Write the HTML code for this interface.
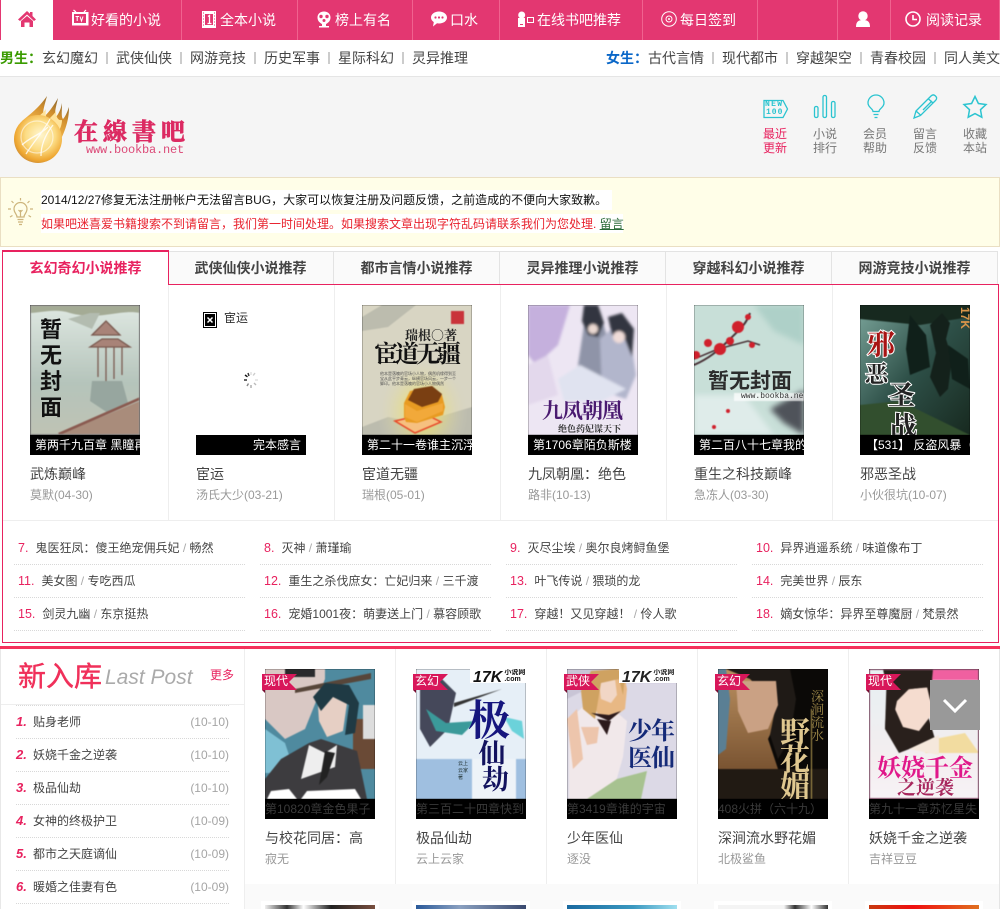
<!DOCTYPE html>
<html lang="zh"><head><meta charset="utf-8"><title>在線書吧</title>
<style>
*{box-sizing:border-box}
html,body{margin:0;padding:0;background:#fff}
body{width:1000px;height:909px;position:relative;overflow:hidden;font:12px/20px "Liberation Sans","Noto Sans CJK SC",sans-serif;color:#333}
.a{position:absolute}
.t{position:absolute;white-space:nowrap;height:20px;line-height:20px}
.n{color:#fff;font-size:14px}
.v{position:absolute;top:0;height:40px;width:1px;background:#f0628f}
.s{font-size:14px;color:#444}
.s i{display:inline-block;width:2px;height:12px;background:#ccc;margin:0 8px;vertical-align:-1px}
.c{font-family:"Noto Sans CJK TC",sans-serif}
.ic{position:absolute;left:0;top:0}
.lb{position:absolute;width:30px;text-align:center;font-size:12px;line-height:14px;color:#777}
.tab{position:absolute;top:251px;height:34px;width:166px;background:#fafafa;border-top:1px solid #e3e3e3;border-right:1px solid #e3e3e3;text-align:center;font-size:14px;font-weight:bold;color:#444;line-height:32px}
.col{position:absolute;top:285px;height:235px;width:1px;background:#eee}
.cv{position:absolute;width:110px;height:150px;overflow:hidden;background:#000}
.cv svg{position:absolute;left:0;top:0;display:block;filter:blur(.5px)}
.cap{position:absolute;left:0;top:130px;width:110px;height:20px;background:#000;color:#fff;font-size:12px;line-height:20px;white-space:nowrap;overflow:hidden;padding-left:5px}
.c2{color:#3a3a3a;padding-left:0}
.ti{position:absolute;font-size:14px;color:#444;white-space:nowrap;line-height:20px}
.au{position:absolute;font-size:12px;color:#999;white-space:nowrap;line-height:20px}
.li{position:absolute;width:231px;height:33px;border-bottom:1px dotted #d8d8d8;font-size:12px;color:#444;white-space:nowrap;padding-left:4px;line-height:32px}
.li b{font-weight:normal;font-size:12.5px;color:#e8225f;margin-right:7px}
.li i{font-style:normal;color:#aaa}
.r{position:absolute;left:16px;width:213px;height:33px;border-bottom:1px dotted #d8d8d8;font-size:12px;color:#444;line-height:32px;white-space:nowrap}
.r b{display:inline-block;width:17px;color:#e8225f;font:italic bold 13px/32px "Liberation Sans",sans-serif}
.r span{position:absolute;right:0;top:0;color:#a5a5a5}
.rb{position:absolute;width:39px;height:17px}
.rb span{position:absolute;left:5px;top:-2px;font-size:12px;line-height:20px;color:#fff;letter-spacing:0}
.d{position:absolute;top:649px;height:235px;width:1px;background:#eee}
.o{-webkit-text-stroke:2px #fff;paint-order:stroke fill}
</style></head><body>

<!-- top nav -->
<div class="a" style="left:0;top:0;width:1000px;height:40px;background:#e33771"></div>
<div class="a" style="left:1px;top:0;width:52px;height:40px;background:#fff"></div>
<div class="v" style="left:181px"></div><div class="v" style="left:297px"></div><div class="v" style="left:412px"></div><div class="v" style="left:499px"></div><div class="v" style="left:642px"></div><div class="v" style="left:757px"></div><div class="v" style="left:837px"></div><div class="v" style="left:890px"></div><div class="v" style="left:999px"></div>
<svg class="ic" width="1000" height="40" viewBox="0 0 1000 40">
 <path d="M27 11 18 19.500 20 21 27 14.500 34 21 36 19.500 32.500 16V12H30V13.800Z" fill="#e33771"/>
 <path d="M21 21 27 16 33 21V27H29.500V22.500H24.500V27H21Z" fill="#e33771"/>
 <path d="M72 12h16.500v13.500H72z" fill="#fff"/><path d="M76 12 73.500 10M84 12 86 10" stroke="#fff" fill="none" stroke-width="1.200"/><path d="M74 14h12v9H74z" fill="#e33771"/><path d="M75.500 16.500h3.500M77.200 16.500v4.500M80 16.500l1.500 4.500 1.500-4.500" stroke="#fff" fill="none"/>
 <path d="M202 11h14v17h-14z" fill="#fff"/><path d="M205 14h8v11h-8z" fill="#e33771"/><path d="M208 16.500 209.500 15.500V23.500M207.500 23.500h4" stroke="#fff" fill="none" stroke-width="1.300"/><path d="M203 13h1M203 16h1M203 19h1M203 22h1M203 25h1M214 13h1M214 16h1M214 19h1M214 22h1M214 25h1" stroke="#e33771"/>
 <path d="M324 11.500c4 0 6.500 2.600 6.500 6 0 3.500-2.500 5.500-4.500 6.500v2h3v1.500h-10V26h3v-2c-2-1-4.500-3-4.500-6.500 0-3.400 2.500-6 6.500-6z" fill="#fff"/><circle cx="321" cy="16.500" r="1.700" fill="#e33771"/><circle cx="327" cy="16.500" r="1.700" fill="#e33771"/><circle cx="324" cy="20.500" r="1.500" fill="#e33771"/>
 <path d="M439 11.500c4.400 0 8 2.500 8 6s-3.600 6-8 6c-.7 0-1.300-.1-2-.2L433 26.500l.8-4.400c-1.700-1.100-2.800-2.700-2.800-4.600 0-3.500 3.600-6 8-6z" fill="#fff"/><circle cx="435.500" cy="17.500" r="1.100" fill="#e33771"/><circle cx="439" cy="17.500" r="1.100" fill="#e33771"/><circle cx="442.500" cy="17.500" r="1.100" fill="#e33771"/>
 <path d="M518 18h7v9h-7z" fill="#fff"/><circle cx="521.700" cy="15" r="3.500" fill="#fff"/><path d="M520 24.500h3" stroke="#e33771"/><path d="M527.500 17.500h6v5h-6z" fill="none" stroke="#fff"/>
 <circle cx="669" cy="19" r="7.300" fill="none" stroke="#fff"/><circle cx="669" cy="19" r="3" fill="none" stroke="#fff"/><circle cx="669" cy="19" r="1" fill="#fff"/>
 <circle cx="863" cy="16" r="4.700" fill="#fff"/><path d="M856 27c0-5 2-7 7-7s7 2 7 7z" fill="#fff"/>
 <circle cx="913" cy="19" r="7" fill="none" stroke="#fff" stroke-width="1.600"/><path d="M913 15v4.500h4" fill="none" stroke="#fff" stroke-width="1.600"/>
</svg>
<div class="t n" style="left:91px;top:10px">好看的小说</div>
<div class="t n" style="left:220px;top:10px">全本小说</div>
<div class="t n" style="left:335px;top:10px">榜上有名</div>
<div class="t n" style="left:450px;top:10px">口水</div>
<div class="t n" style="left:537px;top:10px">在线书吧推荐</div>
<div class="t n" style="left:680px;top:10px">每日签到</div>
<div class="t n" style="left:926px;top:10px">阅读记录</div>

<!-- sub nav -->
<div class="a" style="left:0;top:76px;width:1000px;height:1px;background:#e5e5e5"></div>
<div class="t s" style="left:0;top:48px"><b style="color:#3a9b00">男生<span class="c">：</span></b>玄幻魔幻<i></i>武侠仙侠<i></i>网游竞技<i></i>历史军事<i></i>星际科幻<i></i>灵异推理</div>
<div class="t s" style="left:606px;top:48px"><b style="color:#0a67c8">女生<span class="c">：</span></b>古代言情<i></i>现代都市<i></i>穿越架空<i></i>青春校园<i></i>同人美文</div>

<!-- header -->
<div class="a" style="left:0;top:77px;width:1000px;height:100px;background:#f5f5f5"></div>
<svg class="ic" style="top:85px" width="200" height="85" viewBox="0 0 200 85">
 <defs><radialGradient id="fl" cx=".55" cy=".42" r=".62"><stop offset="0" stop-color="#fff6cf"/><stop offset=".5" stop-color="#fcdc84"/><stop offset=".85" stop-color="#eeA630"/><stop offset="1" stop-color="#c98a3a"/></radialGradient>
 <linearGradient id="fm" x1=".8" y1="0" x2=".2" y2="1"><stop offset="0" stop-color="#7a5c2c"/><stop offset=".35" stop-color="#d18f2e"/><stop offset=".8" stop-color="#fbbf50"/></linearGradient></defs>
 <path d="M22 36C30 29 38 24 47 11 44 22 42 28 44 32 50 26 54 20 58 13 56 22 54 28 56 32 59 28 61 24 62 18 62 26 61 32 63 34 65 32 67 28 69 22 69 34 66 44 60 56L40 50Z" fill="url(#fm)"/>
 <path d="M36 34C40 30 43 28 46 24 45 30 46 34 50 33 53 30 55 28 56 26 56 32 58 36 62 35 62 40 60 44 58 48L40 44Z" fill="#ffe39a"/>
 <circle cx="38" cy="54" r="24" fill="url(#fl)"/>
 <circle cx="37" cy="52" r="16" fill="none" stroke="#fff" stroke-width="1.200" opacity=".55"/>
 <path d="M26 69C34 56 44 46 50 34M41 71C41 60 45 50 53 40M22 60C30 52 40 50 48 42" stroke="#fff" fill="none" stroke-width="1.300" opacity=".8"/>
</svg>
<div class="t" style="left:74px;top:114px;height:32px;font:bold 24px/32px 'Noto Serif CJK SC',serif;color:#dc2a62;letter-spacing:5px;-webkit-text-stroke:.7px #dc2a62">在線書吧</div>
<div class="t" style="left:86px;top:140px;font:12px/20px 'Liberation Mono',monospace;color:#dc4a78;letter-spacing:-.2px">www.bookba.net</div>

<svg class="ic" width="1000" height="130" viewBox="0 0 1000 130" fill="none" stroke="#2bc4d0" stroke-width="1.300">
 <path d="M764 100.500h19l4.500 8.500-4.500 8.500h-19z"/>
 <rect x="814.500" y="106.500" width="3.500" height="11" rx="1.500"/><rect x="823" y="95.500" width="3.500" height="22" rx="1.500"/><rect x="831.500" y="101.500" width="3.500" height="16" rx="1.500"/>
 <g transform="translate(0 2.500)"><path d="M873 109c0-3-5-4-5-8.500a8 8 0 0 1 16 0c0 4.500-5 5.500-5 8.500zM873.500 112h5M874.500 115h3"/></g>
 <path d="M914 118l2-7 15-15c1.500-1.500 3-1.500 4.500 0s1.500 3 0 4.500l-15 15zM916 111l5 4.500M928 98.500l5 4.500M920 107l9-9M923 110l9-9"/>
 <path d="M975 96.500l3.400 7 7.600 1-5.500 5.200 1.300 7.500-6.800-3.600-6.800 3.600 1.300-7.500-5.500-5.200 7.600-1z" stroke-width="1.500"/>
</svg>
<div class="t" style="left:765px;top:100px;width:22px;height:9px;font:bold 8px/9px 'Liberation Mono',monospace;color:#2bc4d0;letter-spacing:1.300px">NEW</div>
<div class="t" style="left:766px;top:108px;width:22px;height:9px;font:bold 8px/9px 'Liberation Mono',monospace;color:#2bc4d0;letter-spacing:1px">100</div>
<div class="lb" style="left:760px;top:127px;color:#e8225f">最近<br>更新</div>
<div class="lb" style="left:810px;top:127px">小说<br>排行</div>
<div class="lb" style="left:860px;top:127px">会员<br>帮助</div>
<div class="lb" style="left:910px;top:127px">留言<br>反馈</div>
<div class="lb" style="left:960px;top:127px">收藏<br>本站</div>

<!-- notice -->
<div class="a" style="left:0;top:177px;width:1000px;height:70px;background:#fffee8;border:1px solid #eadfc3"></div>
<svg class="ic" style="left:8px;top:197px" width="25" height="30" viewBox="0 0 25 30" fill="none" stroke="#cdb57c" stroke-width="1.200">
 <path d="M9 20c0-3-3-4-3-8a6.500 6.500 0 0 1 13 0c0 4-3 5-3 8zM9.500 22.500h6M10 25h5M11 27.500h3M12.500 20v-7M10.500 13l2 2 2-2"/>
 <path d="M12.500 1v2.500M3.500 4l2 2M21.500 4l-2 2M0 12h3M22 12h3M2 20l2.500-1.500M23 20l-2.500-1.500"/>
</svg>
<div class="t" style="left:41px;top:190px;height:20px;background:#fff;color:#111;width:571px">2014/12/27修复无法注册帐户无法留言BUG，大家可以恢复注册及问题反馈，之前造成的不便向大家致歉。</div>
<div class="t" style="left:41px;top:214px;height:19px;background:#fff;color:#e8222e;width:582px">如果吧迷喜爱书籍搜索不到请留言，我们第一时间处理。如果搜索文章出现字符乱码请联系我们为您处理. <span style="color:#2a6a38;text-decoration:underline">留言</span></div>

<!-- tabs -->
<div class="tab" style="left:168px">武侠仙侠小说推荐</div>
<div class="tab" style="left:334px">都市言情小说推荐</div>
<div class="tab" style="left:500px">灵异推理小说推荐</div>
<div class="tab" style="left:666px">穿越科幻小说推荐</div>
<div class="tab" style="left:832px">网游竞技小说推荐</div>
<div class="a" style="left:2px;top:284px;width:997px;height:359px;border:1px solid #e8225f"></div>
<div class="a" style="left:2px;top:250px;width:167px;height:36px;background:#fff;border:1px solid #e8225f;border-bottom:0;border-top-width:2px;text-align:center;font-size:14px;font-weight:bold;color:#e8225f;line-height:33px">玄幻奇幻小说推荐</div>
<div class="col" style="left:168px"></div><div class="col" style="left:334px"></div><div class="col" style="left:500px"></div><div class="col" style="left:666px"></div><div class="col" style="left:832px"></div>
<div class="a" style="left:3px;top:520px;width:995px;height:1px;background:#eee"></div>

<!-- row 1 covers -->
<div class="cv" style="left:30px;top:305px">
 <svg width="110" height="130" viewBox="0 0 110 130"><defs><linearGradient id="a1" x1="0" y1="0" x2="0" y2="1"><stop offset="0" stop-color="#dfe8e2"/><stop offset=".6" stop-color="#b5c4bb"/><stop offset="1" stop-color="#bfc3b4"/></linearGradient></defs>
 <rect width="110" height="130" fill="url(#a1)"/><path d="M0 0h110v8C90 4 70 16 40 8 25 3 10 8 0 8z" fill="#a4ab95"/>
 <path d="M38 14 62 24 70 8H60z" fill="#b3bcb0"/>
 <path d="M62 30l10-10 4-4 4 4 10 10zM60 42l12-8h16l12 8zM68 42v30M76 42v34M84 42v32M92 42v28" stroke="#7a5a50" fill="#a88378" stroke-width="1.300"/>
 <path d="M62 76h30l6 22-20 10-18-12z" fill="#97a69f"/>
 <path d="M28 130l82-34v34z" fill="#a98c7b"/><path d="M28 128l82-36v3L30 130z" fill="#8a5a50"/>
 <rect x="0.500" y="0.500" width="109" height="129" fill="none" stroke="#999"/></svg>
 <div class="t" style="left:10px;top:12px;width:22px;height:110px;font:bold 22px/26px 'Liberation Sans','Noto Sans CJK SC',sans-serif;color:#111;white-space:normal;text-align:center">暂无封面</div>
 <div class="cap">第两千九百章 黑瞳再现</div></div>
<div class="cv" style="left:196px;top:305px;background:#fff">
 <svg style="filter:none" width="110" height="130" viewBox="0 0 110 130"><rect x="7.500" y="7.500" width="13" height="15" fill="#fff" stroke="#000"/><rect x="9" y="9" width="10" height="12" fill="#000"/><path d="M11.500 12.500l5 5M16.500 12.500l-5 5" stroke="#fff" stroke-width="1.500"/>
 <g stroke-width="1.400"><path d="M55 67v3" stroke="#ddd"/><path d="M59 68l-1.800 2.500" stroke="#ccc"/><path d="M62 75h-3" stroke="#ddd"/><path d="M60 80l-2-2" stroke="#bbb"/><path d="M55 83v-3" stroke="#aaa"/><path d="M51 81l1.500-2.500" stroke="#888"/><path d="M48 75h3" stroke="#222"/><path d="M49 70l2.500 1.800" stroke="#111"/><path d="M52 68l1 3" stroke="#333"/></g></svg>
 <div class="t" style="left:28px;top:3px;color:#333">宦运</div>
 <div class="cap" style="text-align:right;padding:0 5px 0 0">完本感言</div></div>
<div class="cv" style="left:362px;top:305px">
 <svg width="110" height="130" viewBox="0 0 110 130"><defs><radialGradient id="a3" cx=".55" cy=".82" r=".42"><stop offset="0" stop-color="#f6e64a"/><stop offset="1" stop-color="#d9d6c4" stop-opacity="0"/></radialGradient></defs>
 <rect width="110" height="130" fill="#d8d5c3"/><path d="M0 12 20 0h34L26 22 0 26zM0 122l26-10 30 6 54-16v28H0z" fill="#bcbcae"/><rect width="110" height="130" fill="url(#a3)"/>
 <rect x="89" y="6" width="13" height="13" fill="#c9333a"/>
 <path d="M33 116l30-7 16 8-26 11z" fill="#f6c080" stroke="#e84a2a" stroke-width="1.500"/>
 <g transform="translate(10 33)"><path d="M34 84l-2-5v-14l6-12 20-4 12 8 3 12-2 8-26 8z" fill="#e89b22"/><path d="M36 62l6-11 18-3 10 8-4 8-16 5z" fill="#7a3f12"/><path d="M33 66l12 7v11l-12-5zM45 73 71 65v8l-26 11z" fill="#f2a93a"/></g></svg>
 <div class="t" style="left:43px;top:20px;font:bold 13px/20px 'Noto Serif CJK SC',serif;color:#222">瑞根○著</div>
 <div class="t" style="left:12px;top:32px;height:30px;font:bold 24px/30px 'Noto Serif CJK SC',serif;color:#111;letter-spacing:-3px">宦道无疆</div>
 <div class="t" style="left:18px;top:66px;width:78px;height:16px;font-size:4px;line-height:5px;color:#555;white-space:normal;overflow:hidden">他本是落魄的官场小人物，偶然机缘得到至宝从此平步青云，纵横官场风云，一步一个脚印。他本是落魄的官场小人物偶然</div>
 <div class="cap">第二十一卷谁主沉浮</div></div>
<div class="cv" style="left:528px;top:305px">
 <svg width="110" height="130" viewBox="0 0 110 130"><defs><filter id="bl" x="-10%" y="-10%" width="120%" height="120%"><feGaussianBlur stdDeviation="1.200"/></filter></defs>
 <rect width="110" height="130" fill="#ede6f3"/><g filter="url(#bl)"><path d="M0 0h42L30 40 8 60 0 50z" fill="#c5b0dd"/><path d="M0 60l20-10 10 40-30 10z" fill="#e3d8ec"/>
 <path d="M50 60 56 20l18-6 10 36-6 38-30-4z" fill="#8f94a8"/><path d="M72 34l16-14 14 10 6 40-10 24-24-8z" fill="#b2b6cc"/><path d="M30 74l22-14 46 24-24 12H36z" fill="#e0e3f0"/>
 <path d="M56 0h14l6 18-6 14-10-2-6-14zM80 12l14-4 12 16-2 28-8-20-12-2z" fill="#32343f"/><circle cx="65" cy="24" r="5" fill="#ebd9d2"/><circle cx="91" cy="32" r="6" fill="#f0dcd8"/></g></svg>
 <div class="t" style="left:14px;top:88px;height:34px;font:bold 21px/34px 'Noto Serif CJK SC',serif;color:#4a1a70;letter-spacing:-1px">九凤朝凰</div>
 <div class="t" style="left:30px;top:118px;height:12px;font:bold 9px/12px 'Noto Serif CJK SC',serif;color:#333">绝色药妃谋天下</div>
 <div class="cap">第1706章陌负斯楼</div></div>
<div class="cv" style="left:694px;top:305px">
 <svg width="110" height="130" viewBox="0 0 110 130"><defs><filter id="b3"><feGaussianBlur stdDeviation="3"/></filter></defs>
 <rect width="110" height="130" fill="#c8dfd8"/><g filter="url(#b3)"><path d="M60 0h50v40L80 26z" fill="#aed0c8"/><path d="M0 90h50l30 40H0z" fill="#dfecea"/><path d="M110 85 76 104l14 14 20 12z" fill="#50535a"/></g>
 <path d="M0 60C14 54 24 46 36 34 44 26 52 20 56 8" stroke="#4a3338" stroke-width="2" fill="none"/><path d="M0 54 24 44 54 36 66 40" stroke="#4a3338" stroke-width="1.500" fill="none"/>
 <g fill="#d0202c"><circle cx="44" cy="22" r="6"/><circle cx="26" cy="44" r="6"/><circle cx="14" cy="38" r="4"/><circle cx="36" cy="36" r="4"/><circle cx="54" cy="12" r="3"/><circle cx="58" cy="40" r="3"/><circle cx="2" cy="50" r="4"/><circle cx="34" cy="106" r="2"/><circle cx="20" cy="122" r="2"/></g>
 <rect x="40" y="88" width="70" height="8" fill="#fff" opacity=".7"/></svg>
 <div class="t" style="left:14px;top:65px;height:24px;font:bold 21px/24px 'Liberation Sans','Noto Sans CJK SC',sans-serif;color:#2c2c2c">暂无封面</div>
 <div class="t" style="left:47px;top:86px;height:12px;font:8px/12px 'Liberation Mono',monospace;color:#333">www.bookba.net</div>
 <div class="cap">第二百八十七章我的梦想</div></div>
<div class="cv" style="left:860px;top:305px">
 <svg width="110" height="130" viewBox="0 0 110 130"><defs><linearGradient id="a6" x1="0" y1="0" x2="1" y2="1"><stop offset="0" stop-color="#7aa49a"/><stop offset=".5" stop-color="#2e5048"/><stop offset="1" stop-color="#17291f"/></linearGradient></defs>
 <rect width="110" height="130" fill="url(#a6)"/><path d="M0 0h110v12L60 20 0 14z" fill="#17291f"/><path d="M70 20l12-12 8 10-4 16 6 20-4 30-8 8-10-20 6-24z" fill="#14211b"/><path d="M66 30 50 10 46 44 50 70 70 62zM88 40l20 14 2 30-18-10z" fill="#10201a"/><path d="M0 100l40-4 70 34H0z" fill="#324f2e"/></svg>
 <div class="t" style="left:99px;top:2px;height:40px;width:11px;font:bold 12px/11px 'Liberation Sans',sans-serif;color:#d9954a;writing-mode:vertical-rl">17K</div>
 <div class="t o" style="left:7px;top:21px;height:34px;font:bold 28px/34px 'Noto Serif CJK SC',serif;color:#a81414">邪</div>
 <div class="t o" style="left:5px;top:54px;height:28px;font:bold 23px/28px 'Noto Serif CJK SC',serif;color:#222">恶</div>
 <div class="t o" style="left:28px;top:73px;height:32px;font:bold 27px/32px 'Noto Serif CJK SC',serif;color:#222">圣</div>
 <div class="t o" style="left:30px;top:104px;height:32px;font:bold 27px/32px 'Noto Serif CJK SC',serif;color:#222">战</div>
 <div class="cap" style="padding-left:6px">【531】 反盗风暴（三）</div></div>

<div class="ti" style="left:30px;top:464px">武炼巅峰</div><div class="au" style="left:30px;top:485px">莫默(04-30)</div>
<div class="ti" style="left:196px;top:464px">宦运</div><div class="au" style="left:196px;top:485px">汤氏大少(03-21)</div>
<div class="ti" style="left:362px;top:464px">宦道无疆</div><div class="au" style="left:362px;top:485px">瑞根(05-01)</div>
<div class="ti" style="left:528px;top:464px">九凤朝凰<span class="c">：</span>绝色</div><div class="au" style="left:528px;top:485px">路非(10-13)</div>
<div class="ti" style="left:694px;top:464px">重生之科技巅峰</div><div class="au" style="left:694px;top:485px">急冻人(03-30)</div>
<div class="ti" style="left:860px;top:464px">邪恶圣战</div><div class="au" style="left:860px;top:485px">小伙很坑(10-07)</div>

<!-- list -->
<div class="li" style="left:14px;top:532px"><b>7.</b>鬼医狂凤<span class="c">：</span>傻王绝宠佣兵妃 <i>/</i> 畅然</div>
<div class="li" style="left:260px;top:532px"><b>8.</b>灭神 <i>/</i> 萧瑾瑜</div>
<div class="li" style="left:506px;top:532px"><b>9.</b>灭尽尘埃 <i>/</i> 奥尔良烤鲟鱼堡</div>
<div class="li" style="left:752px;top:532px"><b>10.</b>异界逍遥系统 <i>/</i> 味道像布丁</div>
<div class="li" style="left:14px;top:565px"><b>11.</b>美女图 <i>/</i> 专吃西瓜</div>
<div class="li" style="left:260px;top:565px"><b>12.</b>重生之杀伐庶女<span class="c">：</span>亡妃归来 <i>/</i> 三千渡</div>
<div class="li" style="left:506px;top:565px"><b>13.</b>叶飞传说 <i>/</i> 猥琐的龙</div>
<div class="li" style="left:752px;top:565px"><b>14.</b>完美世界 <i>/</i> 辰东</div>
<div class="li" style="left:14px;top:598px"><b>15.</b>剑灵九幽 <i>/</i> 东京挺热</div>
<div class="li" style="left:260px;top:598px"><b>16.</b>宠婚1001夜<span class="c">：</span>萌妻送上门 <i>/</i> 慕容顾歌</div>
<div class="li" style="left:506px;top:598px"><b>17.</b>穿越<span class="c">！</span>又见穿越<span class="c">！</span> <i>/</i> 伶人歌</div>
<div class="li" style="left:752px;top:598px"><b>18.</b>嫡女惊华<span class="c">：</span>异界至尊魔厨 <i>/</i> 梵景然</div>

<!-- new arrivals -->
<div class="a" style="left:0;top:646px;width:1000px;height:3px;background:#f5315c"></div>
<div class="a" style="left:0;top:649px;width:1px;height:260px;background:#e8e8e8"></div>
<div class="a" style="left:1px;top:704px;width:243px;height:1px;background:#eee"></div>
<div class="t" style="left:18px;top:658px;height:38px;font:28px/38px 'Liberation Sans','Noto Sans CJK SC',sans-serif;color:#f0305a;-webkit-text-stroke:.4px #f0305a">新入库</div>
<div class="t" style="left:105px;top:663px;height:30px;font:italic 21px/30px 'Liberation Sans',sans-serif;color:#aaa">Last Post</div>
<div class="t" style="left:210px;top:665px;color:#e8225f">更多</div>
<div class="a" style="left:16px;top:705px;width:213px;height:0;border-top:1px dotted #d8d8d8"></div>
<div class="r" style="top:706px"><b>1.</b>贴身老师<span>(10-10)</span></div>
<div class="r" style="top:739px"><b>2.</b>妖娆千金之逆袭<span>(10-10)</span></div>
<div class="r" style="top:772px"><b>3.</b>极品仙劫<span>(10-10)</span></div>
<div class="r" style="top:805px"><b>4.</b>女神的终极护卫<span>(10-09)</span></div>
<div class="r" style="top:838px"><b>5.</b>都市之天庭谪仙<span>(10-09)</span></div>
<div class="r" style="top:871px"><b>6.</b>暖婚之佳妻有色<span>(10-09)</span></div>

<div class="d" style="left:244px;height:260px"></div><div class="d" style="left:395px"></div><div class="d" style="left:546px"></div><div class="d" style="left:697px"></div><div class="d" style="left:848px"></div><div class="d" style="left:999px;height:260px;background:#e5e5e5"></div>
<div class="a" style="left:245px;top:884px;width:754px;height:25px;background:#fafafa"></div>

<div class="cv" style="left:265px;top:669px">
 <svg width="110" height="130" viewBox="0 0 110 130"><rect width="110" height="130" fill="#4f8a9f"/><path d="M0 0h60v10L40 60 20 70 0 50z" fill="#d9c8c4"/><path d="M20 0h30v8H20z" fill="#2a2a2c"/><path d="M30 20l76-16v6L30 24z" fill="#57463a"/><path d="M88 50h22v50H88z" fill="#6a4a36"/><path d="M0 60l20 14 10 30-30 0z" fill="#7fc0d4"/>
 <path d="M0 110 16 90 44 74 56 70 92 82 102 130H0z" fill="#3d3c3f"/><path d="M44 76 60 84 72 76 70 98 36 110z" fill="#eee"/><path d="M60 82l-6 34 8-8 8-24z" fill="#222"/>
 <path d="M52 22 74 16 82 34 78 62 62 68 54 52z" fill="#e6cfc4"/><path d="M48 28 60 14 84 16 94 34 90 64 80 66 84 36 68 28 56 42z" fill="#1f3a44"/>
 <rect x="98" y="36" width="12" height="34" fill="#ddd"/><path d="M2 130l4-8 18-2 8 10zM36 130l6-8 48-2 6 10z" fill="#fff"/></svg>
 <div class="cap c2">第10820章金色果子</div></div>
<div class="cv" style="left:416px;top:669px">
 <svg width="110" height="130" viewBox="0 0 110 130"><rect width="110" height="130" fill="#e6eff7"/><rect x="0" y="90" width="56" height="40" fill="#9fbfe0"/><rect x="56" y="90" width="54" height="40" fill="#eef3f8"/><rect x="100" y="90" width="10" height="40" fill="#9fbfe0"/><path d="M4 20 24 8 40 24 32 60 14 78 4 60z" fill="#45485a"/><path d="M10 40l20 14 30-2-14 14-26-4z" fill="#3b9a9a"/><path d="M38 34l48-14-48 18z" fill="#333"/><path d="M88 48l18 4 2 18-12-8z" fill="#6bd2da"/></svg>
 <div class="t" style="left:54px;top:0;width:56px;height:14px;font:italic bold 16px/14px 'Liberation Sans',sans-serif;color:#111;background:#fff;padding-left:3px">17K<span style="font:bold 7px/7px 'Liberation Sans','Noto Sans CJK SC',sans-serif;margin-left:2px;display:inline-block;vertical-align:1px">小说网<br>.com</span></div>
 <div class="t" style="left:52px;top:24px;height:50px;font:bold 42px/50px 'Noto Serif CJK SC',serif;color:#16167e">极</div>
 <div class="t" style="left:60px;top:70px;height:58px;font:bold 27px/26px 'Noto Serif CJK SC',serif;color:#12125e;white-space:normal;width:32px;text-align:center">仙<br><span style="margin-left:6px">劫</span></div>
 <div class="t" style="left:42px;top:92px;height:36px;width:10px;font:5px/7px 'Liberation Sans','Noto Sans CJK SC',sans-serif;color:#233;white-space:normal">云上云家著</div>
 <div class="cap c2">第三百二十四章快到</div></div>
<div class="cv" style="left:567px;top:669px">
 <svg width="110" height="130" viewBox="0 0 110 130"><rect width="110" height="130" fill="#dcd9e6"/><path d="M0 0h110v14H60L20 20 0 30z" fill="#c9c5d6"/><path d="M2 130V50l16-14 30 6 12 10-4 36-12 42z" fill="#f1e8ea"/><path d="M30 4 56 0 60 20 58 40 44 50 30 44 22 20z" fill="#e8b884"/><path d="M32 14 48 10 50 26 44 34 34 30z" fill="#f1d6c5"/><path d="M24 2 50 0 58 6 56 26 52 10 34 14 28 50 16 40 14 22z" fill="#cfa261"/><path d="M24 44l18 2 12-4-12 10zM30 50l10 16 4-14z" fill="#2c1a1c"/><path d="M14 58l18 0-2 16-10 2z" fill="#edc5ac"/><path d="M0 50 10 40 16 90 6 100z" fill="#edc5ac"/><path d="M20 130l30-20 30-8-6 28z" fill="#a7c290"/></svg>
 <div class="t" style="left:52px;top:0;width:58px;height:14px;font:italic bold 16px/14px 'Liberation Sans',sans-serif;color:#222;background:#fff;padding-left:3px">17K<span style="font:bold 7px/7px 'Liberation Sans','Noto Sans CJK SC',sans-serif;margin-left:2px;display:inline-block;vertical-align:1px">小说网<br>.com</span></div>
 <div class="t" style="left:60px;top:46px;height:78px;width:48px;font:bold 24px/27px 'Noto Serif CJK SC',serif;color:#152a78;white-space:normal;letter-spacing:-1px;text-align:center">少年医仙</div>
 <div class="cap c2">第3419章谁的宇宙</div></div>
<div class="cv" style="left:718px;top:669px">
 <svg width="110" height="130" viewBox="0 0 110 130"><defs><linearGradient id="b4" x1="0" y1="0" x2="0" y2="1"><stop offset="0" stop-color="#ba9060"/><stop offset="1" stop-color="#7a5432"/></linearGradient></defs>
 <rect width="110" height="130" fill="#0b0907"/><path d="M0 0h60L64 40 50 70 60 100H0z" fill="url(#b4)"/><path d="M0 0h8l4 30-4 50-8 6z" fill="#5a7f94"/><path d="M8 0h64l6 30-6 40-12 20-8-24 6-30-26-26z" fill="#1f1a16"/><path d="M18 12h40l2 24-10 24-20 4-10-22z" fill="#caa184"/>
 <rect x="0" y="100" width="110" height="30" fill="#2a2018" opacity=".75"/><rect x="93" y="40" width="1" height="90" fill="#b39a50"/></svg>
 <div class="t" style="left:93px;top:20px;height:50px;width:14px;font:13px/13px 'Noto Serif CJK SC',serif;color:#a08a4a;white-space:normal">深涧流水</div>
 <div class="t" style="left:62px;top:48px;height:82px;width:32px;font:bold 30px/27px 'Noto Serif CJK SC',serif;color:#e0c890;white-space:normal;letter-spacing:-1px">野花媚</div>
 <div class="cap c2">408火拼（六十九）</div></div>
<div class="cv" style="left:869px;top:669px">
 <svg width="110" height="130" viewBox="0 0 110 130"><defs><linearGradient id="b5" x1="0" y1="0" x2="0" y2="1"><stop offset="0" stop-color="#e6f0f2"/><stop offset=".7" stop-color="#f4eef0"/><stop offset="1" stop-color="#f7f3f6"/></linearGradient></defs>
 <rect width="110" height="130" fill="url(#b5)"/><path d="M60 0h50v11H60z" fill="#f060a0"/><path d="M14 0h50L62 22 60 50 66 70 30 84 16 60 18 20z" fill="#29201c"/><path d="M26 22 58 18 64 44 50 62 34 58 26 40z" fill="#f5dccf"/><path d="M18 0H62L64 18 40 20 28 32 22 60 16 60z" fill="#29201c"/><path d="M66 70l30-6 14 20H56z" fill="#f2dca0"/><path d="M40 80l30-14v20z" fill="#f5e8dc"/><rect x=".5" y=".5" width="109" height="129" fill="none" stroke="#a06080"/></svg>
 <div class="t" style="left:8px;top:83px;height:28px;font:bold 24px/28px 'Noto Serif CJK SC',serif;color:#e0188a">妖娆千金</div>
 <div class="t" style="left:28px;top:106px;height:24px;font:bold 19px/24px 'Noto Serif CJK SC',serif;color:#a8285e">之逆袭</div>
 <div class="cap c2">第九十一章苏忆星失</div></div>

<!-- ribbons -->
<svg class="ic" width="1000" height="700" viewBox="0 0 1000 700">
 <defs><g id="rb"><path d="M0 0h35l-8 8 8 8H0z" fill="#d8175a"/><path d="M0 16l3 3v-3z" fill="#7a0a30"/></g></defs>
 <use href="#rb" x="262" y="674"/><use href="#rb" x="413" y="674"/><use href="#rb" x="564" y="674"/><use href="#rb" x="715" y="674"/><use href="#rb" x="866" y="674"/>
</svg>
<div class="rb" style="left:259px;top:673px"><span style="left:5px">现代</span></div>
<div class="rb" style="left:410px;top:673px"><span style="left:5px">玄幻</span></div>
<div class="rb" style="left:561px;top:673px"><span style="left:5px">武侠</span></div>
<div class="rb" style="left:712px;top:673px"><span style="left:5px">玄幻</span></div>
<div class="rb" style="left:863px;top:673px"><span style="left:5px">现代</span></div>

<div class="ti" style="left:265px;top:828px">与校花同居<span class="c">：</span>高</div><div class="au" style="left:265px;top:849px">寂无</div>
<div class="ti" style="left:416px;top:828px">极品仙劫</div><div class="au" style="left:416px;top:849px">云上云家</div>
<div class="ti" style="left:567px;top:828px">少年医仙</div><div class="au" style="left:567px;top:849px">逐没</div>
<div class="ti" style="left:718px;top:828px">深涧流水野花媚</div><div class="au" style="left:718px;top:849px">北极鲨鱼</div>
<div class="ti" style="left:869px;top:828px">妖娆千金之逆袭</div><div class="au" style="left:869px;top:849px">吉祥豆豆</div>

<!-- second row peek -->
<div class="a" style="left:261px;top:901px;width:118px;height:8px;background:#fff"></div>
<div class="a" style="left:412px;top:901px;width:118px;height:8px;background:#fff"></div>
<div class="a" style="left:563px;top:901px;width:118px;height:8px;background:#fff"></div>
<div class="a" style="left:714px;top:901px;width:118px;height:8px;background:#fff"></div>
<div class="a" style="left:865px;top:901px;width:118px;height:8px;background:#fff"></div>
<div class="a" style="left:265px;top:905px;width:110px;height:4px;background:linear-gradient(90deg,#eee,#333 20%,#fff 35%,#222 60%,#7a5040)"></div>
<div class="a" style="left:416px;top:905px;width:110px;height:4px;background:linear-gradient(90deg,#2a5a9a,#8aa0c0 40%,#3a4a70)"></div>
<div class="a" style="left:567px;top:905px;width:110px;height:4px;background:linear-gradient(90deg,#1a6aa0,#3a98c0 60%,#a0e0f0)"></div>
<div class="a" style="left:718px;top:905px;width:110px;height:4px;background:linear-gradient(90deg,#f4f4f4 60%,#333 70%,#fff 85%,#333)"></div>
<div class="a" style="left:869px;top:905px;width:110px;height:4px;background:linear-gradient(90deg,#c83a10,#f01010 40%,#e07020)"></div>

<!-- scroll button -->
<div class="a" style="left:930px;top:680px;width:50px;height:50px;background:#999"></div>
<svg class="ic" style="left:930px;top:680px" width="50" height="50" viewBox="0 0 50 50"><path d="M14 20 25 31 36 20" fill="none" stroke="#fff" stroke-width="3"/></svg>
</body></html>
